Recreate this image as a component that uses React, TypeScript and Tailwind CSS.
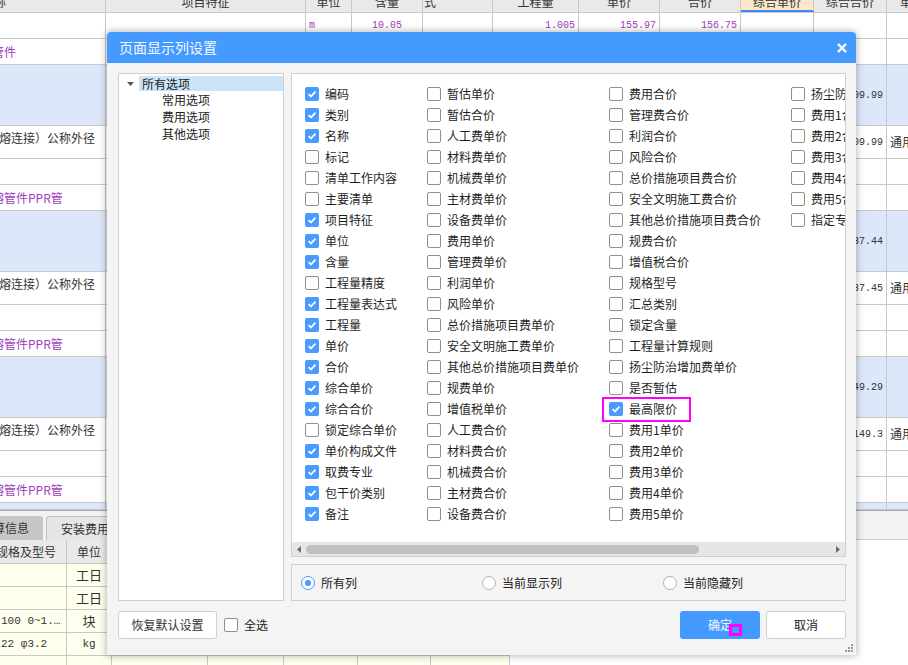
import React from 'react'

const mono = "font-['Liberation_Mono',monospace]"
const purple = 'text-[#a03cbe]'

// top sheet column widths
const W = [
  'w-[106px]',
  'w-[200px]',
  'w-[46px]',
  'w-[71px]',
  'w-[70px]',
  'w-[86px]',
  'w-[81px]',
  'w-[81px]',
  'w-[73px]',
  'w-[73px]',
  'w-[60px]',
]

const headers = ['称', '项目特征', '单位', '含量', '式', '工程量', '单价', '合价', '综合单价', '综合合价', '单价']

type Row = { h: string; blue?: boolean; cells?: Record<number, React.ReactNode> }

const Num = ({ v, p, center }: { v: string; p?: boolean; center?: boolean }) => (
  <span className={`${mono} self-center text-[10px] ${center ? 'mx-auto' : 'ml-auto pr-[3px]'} ${p ? purple : 'text-[#333]'}`}>
    {v}
  </span>
)

const Name = ({ v, p, top }: { v: string; p?: boolean; top?: boolean }) => (
  <span
    className={`whitespace-nowrap text-[12px] ${top ? 'self-start pt-[3px]' : 'self-center'} ${p ? `${purple} -ml-[8px]` : '-ml-[1px] text-[#333]'}`}
  >
    {v}
  </span>
)

const Use = () => <span className="self-center pl-[3px] text-[12px] text-[#333]">通用</span>

const rows: Row[] = [
  {
    h: 'h-[26px]',
    cells: {
      2: <span className={`${mono} self-center pl-[3px] text-[10px] ${purple}`}>m</span>,
      3: <Num v="10.05" p center />,
      5: <Num v="1.005" p />,
      6: <Num v="155.97" p />,
      7: <Num v="156.75" p />,
    },
  },
  { h: 'h-[26px]', cells: { 0: <Name v="管件" p /> } },
  { h: 'h-[61px]', blue: true, cells: { 9: <Num v="1509.99" /> } },
  { h: 'h-[33px]', cells: { 0: <Name v="熔连接）公称外径" top />, 9: <Num v="1509.99" />, 10: <Use /> } },
  { h: 'h-[26px]' },
  { h: 'h-[26px]', cells: { 0: <Name v="熔管件PPR管" p /> } },
  { h: 'h-[61px]', blue: true, cells: { 9: <Num v="1437.44" /> } },
  { h: 'h-[33px]', cells: { 0: <Name v="熔连接）公称外径" top />, 9: <Num v="1437.45" />, 10: <Use /> } },
  { h: 'h-[26px]' },
  { h: 'h-[26px]', cells: { 0: <Name v="熔管件PPR管" p /> } },
  { h: 'h-[61px]', blue: true, cells: { 9: <Num v="1549.29" /> } },
  { h: 'h-[33px]', cells: { 0: <Name v="熔连接）公称外径" top />, 9: <Num v="149.3" />, 10: <Use /> } },
  { h: 'h-[26px]' },
  { h: 'h-[26px]', cells: { 0: <Name v="熔管件PPR管" p /> } },
  { h: 'h-[7px]', blue: true },
]

const BW = ['w-[67px]', 'w-[45px]', 'w-[96px]', 'w-[76px]', 'w-[74px]', 'w-[73px]', 'w-[79px]']

const bottomRows = [
  ['', '工日'],
  ['', '工日'],
  ['100 0~1.…', '块'],
  ['22 φ3.2', 'kg'],
  ['', ''],
]

const Sheet = () => (
  <div>
    <div className="flex h-[13px] overflow-hidden border-b border-[#c8c8c8] bg-[#e9e9e9]">
      {headers.map((t, i) => (
        <div
          key={i}
          className={`${W[i]} shrink-0 border-r border-[#c8c8c8] ${i === 8 ? 'border-b-2 border-b-[#3d8bf0] bg-[#fde7cb]' : ''}`}
        >
          <div
            className={`-mt-[13px] flex h-[30px] items-center text-[12px] text-[#333] ${
              i === 0 ? '-ml-[6px]' : i === 4 ? 'pl-[1px]' : i === 10 ? 'pl-[13px]' : 'justify-center'
            }`}
          >
            {t}
          </div>
        </div>
      ))}
    </div>
    {rows.map((r, ri) => (
      <div key={ri} className={`flex ${r.h} border-b border-[#c8c8c8] ${r.blue ? 'bg-[#dce8fa]' : 'bg-white'}`}>
        {W.map((w, i) => (
          <div key={i} className={`${w} flex shrink-0 overflow-hidden border-r border-[#c8c8c8]`}>
            {r.cells?.[i]}
          </div>
        ))}
      </div>
    ))}
    <div className="flex h-[30px] items-end border-t border-[#a9a9a9] bg-[#f2f2f2]">
      <div className="flex h-[24px] w-[43px] items-center overflow-hidden rounded-tr-[3px] bg-[#c6c6c6]">
        <span className="-ml-[19px] whitespace-nowrap text-[12px] text-[#333]">预算信息</span>
      </div>
      <div className="ml-[3px] flex h-[24px] w-[90px] items-center rounded-t-[3px] border border-b-0 border-[#bdbdbd] bg-[#e6e6e6] pl-[14px] text-[12px] text-[#333]">
        安装费用
      </div>
      <div className="h-full flex-1 border-b border-[#cfcfcf]" />
    </div>
    <div className="w-[510px]">
      <div className="flex h-[24px] border-b border-[#c8c8c8] bg-[#e9e9e9]">
        {BW.map((w, i) => (
          <div key={i} className={`${w} flex shrink-0 items-center overflow-hidden border-r border-[#c8c8c8] text-[12px] text-[#333]`}>
            {i === 0 && <span className="-ml-[4px] whitespace-nowrap">规格及型号</span>}
            {i === 1 && <span className="mx-auto">单位</span>}
          </div>
        ))}
      </div>
      {bottomRows.map((r, ri) => (
        <div key={ri} className="flex h-[23px] border-b border-[#c8c8c8] bg-[#ffffee]">
          {BW.map((w, i) => (
            <div key={i} className={`${w} flex shrink-0 items-center overflow-hidden border-r border-[#c8c8c8] text-[#333]`}>
              {i === 0 && <span className={`${mono} whitespace-nowrap pl-[1px] text-[11px]`}>{r[0]}</span>}
              {i === 1 && <span className={`mx-auto ${r[1] === 'kg' ? `${mono} text-[11px]` : 'text-[13px]'}`}>{r[1]}</span>}
            </div>
          ))}
        </div>
      ))}
    </div>
  </div>
)

const col1 = ['编码', '类别', '名称', '标记', '清单工作内容', '主要清单', '项目特征', '单位', '含量', '工程量精度', '工程量表达式', '工程量', '单价', '合价', '综合单价', '综合合价', '锁定综合单价', '单价构成文件', '取费专业', '包干价类别', '备注']
const col1On = [1, 1, 1, 0, 0, 0, 1, 1, 1, 0, 1, 1, 1, 1, 1, 1, 0, 1, 1, 1, 1]
const col2 = ['暂估单价', '暂估合价', '人工费单价', '材料费单价', '机械费单价', '主材费单价', '设备费单价', '费用单价', '管理费单价', '利润单价', '风险单价', '总价措施项目费单价', '安全文明施工费单价', '其他总价措施项目费单价', '规费单价', '增值税单价', '人工费合价', '材料费合价', '机械费合价', '主材费合价', '设备费合价']
const col3 = ['费用合价', '管理费合价', '利润合价', '风险合价', '总价措施项目费合价', '安全文明施工费合价', '其他总价措施项目费合价', '规费合价', '增值税合价', '规格型号', '汇总类别', '锁定含量', '工程量计算规则', '扬尘防治增加费单价', '是否暂估', '最高限价', '费用1单价', '费用2单价', '费用3单价', '费用4单价', '费用5单价']
const col4 = ['扬尘防治增加费合价', '费用1合价', '费用2合价', '费用3合价', '费用4合价', '费用5合价', '指定专业章节']

const Box = ({ on }: { on?: boolean }) =>
  on ? (
    <span className="flex size-[14px] shrink-0 items-center justify-center rounded-[2px] bg-[#4a9bff]">
      <svg width="10" height="10" viewBox="0 0 10 10">
        <path d="M1.6 5.1 L4 7.4 L8.5 2.7" fill="none" stroke="white" strokeWidth="1.8" />
      </svg>
    </span>
  ) : (
    <span className="size-[14px] shrink-0 rounded-[2px] border border-[#8f8f8f] bg-white" />
  )

const Column = ({ items, on, w }: { items: string[]; on: (i: number) => boolean; w: string }) => (
  <div className={`${w} flex shrink-0 flex-col`}>
    {items.map((t, i) => (
      <div key={t} className="flex h-[21px] items-center gap-[6px] whitespace-nowrap">
        <Box on={on(i)} />
        <span>{t}</span>
      </div>
    ))}
  </div>
)

const Radio = ({ on, label }: { on?: boolean; label: string }) => (
  <div className="flex w-[181px] items-center gap-[6px]">
    {on ? (
      <span className="flex size-[14px] items-center justify-center rounded-full border border-[#4a9bff] bg-white">
        <span className="size-[6px] rounded-full bg-[#4a9bff]" />
      </span>
    ) : (
      <span className="size-[14px] rounded-full border border-[#b3b3b3] bg-white" />
    )}
    <span>{label}</span>
  </div>
)

const Dialog = () => (
  <div className="absolute left-[107px] top-[32px] flex h-[623px] w-[749px] flex-col rounded-t-[4px] bg-[#f4f4f4] shadow-[0_0_7px_1px_rgba(0,0,0,0.28)]">
    <div className="flex h-[31px] shrink-0 items-center justify-between rounded-t-[4px] bg-[#459aff] pl-[12px] pr-[9px] text-[14px] text-[#f5f9ff]">
      <span>页面显示列设置</span>
      <svg width="10" height="10" viewBox="0 0 10 10">
        <path d="M1 1 L9 9 M9 1 L1 9" stroke="white" strokeWidth="2.4" />
      </svg>
    </div>
    <div className="flex flex-col pl-[11px] pr-[10px] pt-[10px]">
      <div className="flex gap-[7px]">
        <div className="h-[528px] w-[166px] shrink-0 border border-[#cfcfcf] bg-white pt-[2px] text-[#222]">
          <div className="flex h-[15px] items-center">
            <div className="flex w-[20px] justify-start pl-[8px]">
              <svg width="7" height="4" viewBox="0 0 7 4">
                <path d="M0 0 H7 L3.5 4 Z" fill="#555" />
              </svg>
            </div>
            <div className="flex h-full flex-1 items-center bg-[#cce4f7] pl-[3px]">所有选项</div>
          </div>
          {['常用选项', '费用选项', '其他选项'].map((t) => (
            <div key={t} className="flex h-[17px] items-center pl-[43px]">
              {t}
            </div>
          ))}
        </div>
        <div className="flex w-[555px] flex-col">
          <div className="flex h-[484px] flex-col border border-[#cfcfcf] bg-white">
            <div className="flex flex-1 overflow-hidden pl-[13px] pt-[9px] text-[#1f1f1f]">
              <Column items={col1} on={(i) => col1On[i] === 1} w="w-[122px]" />
              <Column items={col2} on={() => false} w="w-[182px]" />
              <Column items={col3} on={(i) => i === 15} w="w-[182px]" />
              <Column items={col4} on={() => false} w="w-[140px]" />
            </div>
            <div className="flex h-[14px] shrink-0 items-center bg-[#e6e6e6]">
              <div className="flex w-[14px] justify-center">
                <svg width="4" height="7" viewBox="0 0 4 7">
                  <path d="M4 0 V7 L0 3.5 Z" fill="#6b6b6b" />
                </svg>
              </div>
              <div className="h-[9px] w-[393px] rounded-full bg-[#c0c0c0]" />
              <div className="flex-1" />
              <div className="flex w-[14px] justify-center">
                <svg width="4" height="7" viewBox="0 0 4 7">
                  <path d="M0 0 V7 L4 3.5 Z" fill="#6b6b6b" />
                </svg>
              </div>
            </div>
          </div>
          <div className="mt-[7px] flex h-[37px] items-center border border-[#cfcfcf] bg-[#f4f4f4] pl-[9px] text-[#222]">
            <Radio on label="所有列" />
            <Radio label="当前显示列" />
            <Radio label="当前隐藏列" />
          </div>
        </div>
      </div>
      <div className="mt-[10px] flex h-[28px] items-center">
        <button className="h-[28px] w-[99px] rounded-[3px] border border-[#cfcfcf] bg-white text-[#333]">恢复默认设置</button>
        <div className="ml-[7px] flex items-center gap-[6px] text-[#222]">
          <Box />
          <span>全选</span>
        </div>
        <button className="ml-auto h-[28px] w-[80px] rounded-[3px] bg-[#459aff] text-[#f3f8ff]">确定</button>
        <button className="ml-[6px] h-[28px] w-[80px] rounded-[3px] border border-[#cfcfcf] bg-white text-[#222]">取消</button>
      </div>
    </div>
    <svg className="absolute bottom-[3px] right-[3px]" width="8" height="8" viewBox="0 0 8 8">
      <g fill="#9a9a9a">
        <rect x="6" y="0" width="2" height="2" />
        <rect x="3" y="3" width="2" height="2" />
        <rect x="6" y="3" width="2" height="2" />
        <rect x="0" y="6" width="2" height="2" />
        <rect x="3" y="6" width="2" height="2" />
        <rect x="6" y="6" width="2" height="2" />
      </g>
    </svg>
  </div>
)

export default function App() {
  return (
    <div className="relative h-[665px] w-[908px] overflow-hidden bg-white font-['Noto_Sans_CJK_SC',sans-serif] text-[12px] text-[#222]">
      <Sheet />
      <Dialog />
      <div className="absolute left-[602px] top-[397px] h-[25px] w-[89px] border-2 border-[#ff00ff]" />
      <div className="absolute left-[729px] top-[624px] h-[12px] w-[13px] border-[3px] border-[#ff00ff]" />
    </div>
  )
}
